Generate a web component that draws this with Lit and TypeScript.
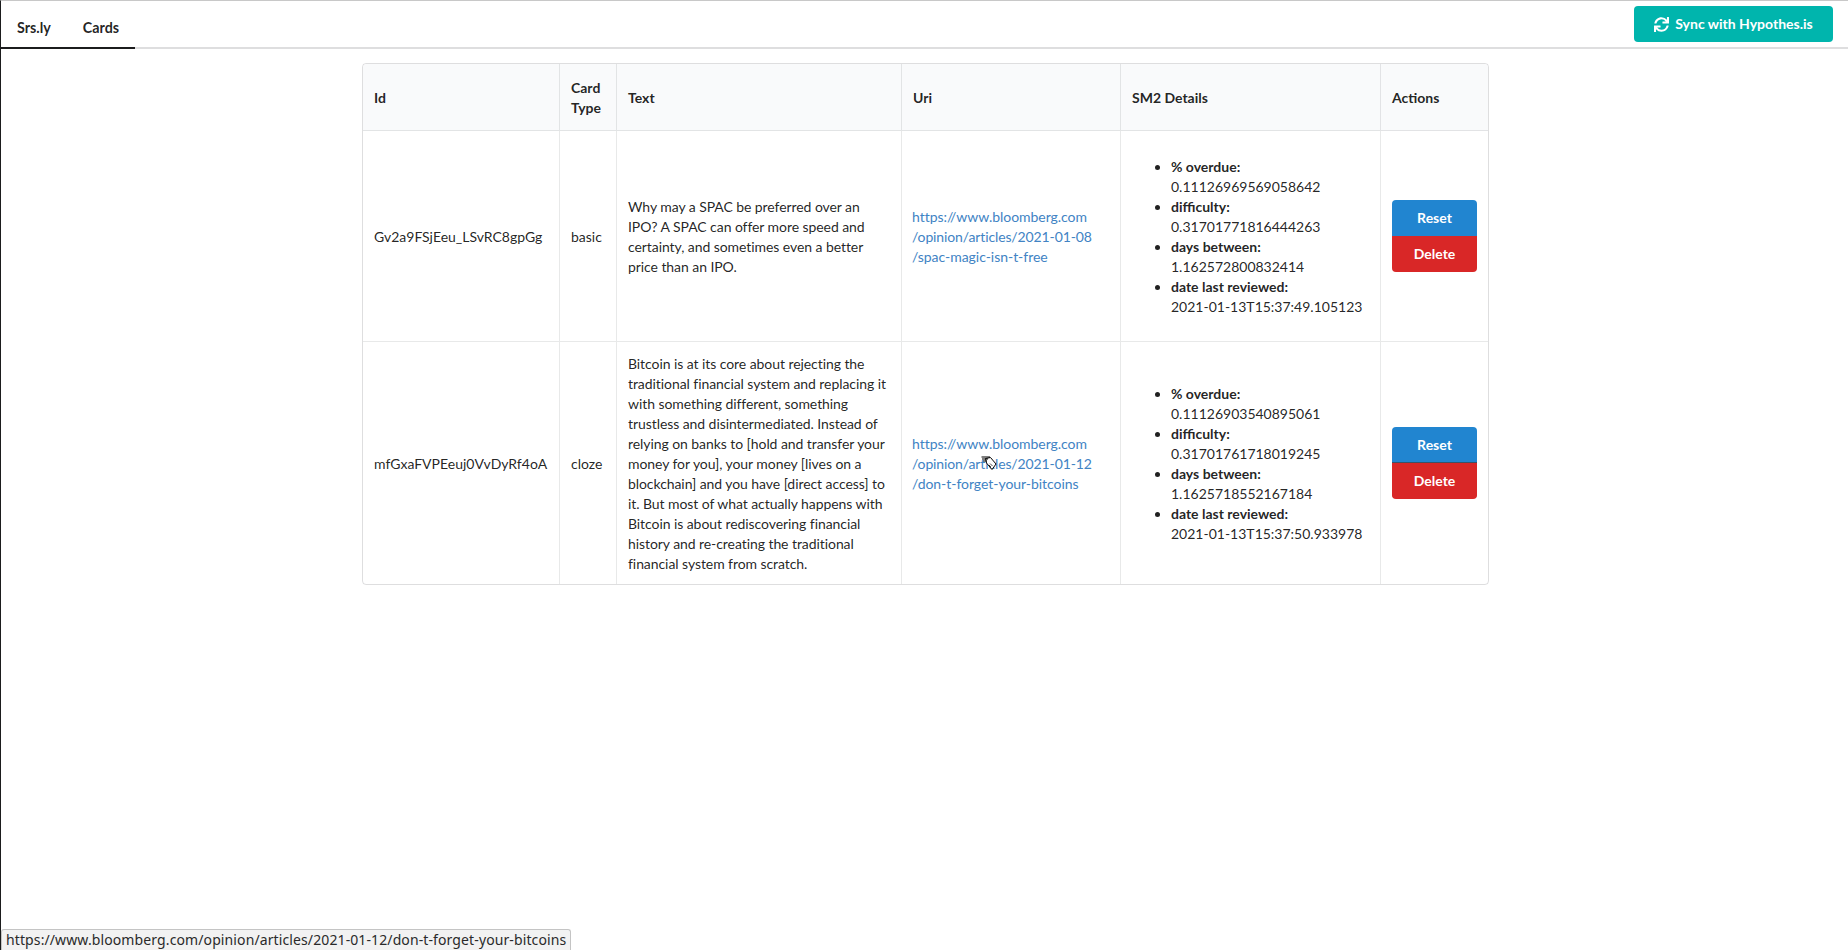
import { LitElement, html, css, svg } from "lit";
import { customElement } from "lit/decorators.js";

const rows = [
  {
    id: "Gv2a9FSjEeu_LSvRC8gpGg", type: "basic",
    text: "Why may a SPAC be preferred over an IPO? A SPAC can offer more speed and certainty, and sometimes even a better price than an IPO.",
    uri: ["https://www.bloomberg.com", "/opinion/articles/2021-01-08", "/spac-magic-isn-t-free"],
    overdue: "0.11126969569058642", difficulty: "0.31701771816444263", days: "1.162572800832414", date: "2021-01-13T15:37:49.105123",
    seam: false,
  },
  {
    id: "mfGxaFVPEeuj0VvDyRf4oA", type: "cloze",
    text: "Bitcoin is at its core about rejecting the traditional financial system and replacing it with something different, something trustless and disintermediated. Instead of relying on banks to [hold and transfer your money for you], your money [lives on a blockchain] and you have [direct access] to it. But most of what actually happens with Bitcoin is about rediscovering financial history and re-creating the traditional financial system from scratch.",
    uri: ["https://www.bloomberg.com", "/opinion/articles/2021-01-12", "/don-t-forget-your-bitcoins"],
    overdue: "0.11126903540895061", difficulty: "0.31701761718019245", days: "1.1625718552167184", date: "2021-01-13T15:37:50.933978",
    seam: true,
  },
];

const syncIcon = svg`<path fill="currentColor" d="M440.65 12.57l4 82.77A247.16 247.16 0 0 0 255.83 8C134.73 8 33.91 94.92 12.29 209.82A12 12 0 0 0 24.09 224h49.05a12 12 0 0 0 11.67-9.26 175.91 175.91 0 0 1 317-56.94l-101.46-4.86a12 12 0 0 0-12.57 12v47.41a12 12 0 0 0 12 12H500a12 12 0 0 0 12-12V12a12 12 0 0 0-12-12h-47.37a12 12 0 0 0-11.98 12.57zM255.83 432a175.61 175.61 0 0 1-146-77.8l101.8 4.87a12 12 0 0 0 12.57-12v-47.4a12 12 0 0 0-12-12H12a12 12 0 0 0-12 12V500a12 12 0 0 0 12 12h47.35a12 12 0 0 0 12-12.6l-4.15-82.57A247.17 247.17 0 0 0 255.83 504c121.11 0 221.93-86.92 243.55-201.82a12 12 0 0 0-11.8-14.18h-49.05a12 12 0 0 0-11.67 9.26A175.86 175.86 0 0 1 255.83 432z"/>`;

@customElement("app-root")
export class AppRoot extends LitElement {
  static styles = css`
    :host {
      display: block;
      position: relative;
      height: 950px;
      box-sizing: border-box;
      overflow: hidden;
      background: #fff;
      border-top: 1px solid #c8c8c8;
      border-left: 1px solid #1b1c1d;
      font-family: Lato, "Helvetica Neue", Arial, sans-serif;
      font-size: 14px;
      line-height: 20px;
      color: rgba(0, 0, 0, 0.87);
    }
    .menu {
      display: flex;
      align-items: stretch;
      justify-content: space-between;
      height: 48px;
      box-sizing: border-box;
      border-bottom: 2px solid rgba(34, 36, 38, 0.15);
    }
    .tabs { display: flex; margin-bottom: -2px; }
    .tab {
      display: flex;
      align-items: flex-end;
      padding: 0 16px 9px;
      font-size: 14.3px;
      font-weight: 700;
      color: rgba(0, 0, 0, 0.87);
      border-bottom: 2px solid #1b1c1d;
    }
    .sync {
      display: flex;
      align-items: center;
      gap: 6px;
      height: 36px;
      width: 199px;
      box-sizing: border-box;
      justify-content: center;
      margin: 5px 15px 0 0;
      border-radius: 4px;
      background: #00b5ad;
      color: #fff;
      font-weight: 700;
    }
    .sync svg { width: 15px; height: 15px; display: block; }
    .content { padding: 14px 0 0 2px; display: flex; justify-content: center; }
    table {
      width: 1127px;
      box-sizing: border-box;
      border: 1px solid rgba(34, 36, 38, 0.15);
      border-radius: 4px;
      border-collapse: separate;
      border-spacing: 0;
      table-layout: fixed;
      color: rgba(0, 0, 0, 0.87);
    }
    th {
      background: #f9fafb;
      padding: 14px 11px 12px;
      text-align: left;
      font-weight: 700;
      color: rgba(0, 0, 0, 0.87);
      border-bottom: 1px solid rgba(34, 36, 38, 0.1);
      border-left: 1px solid rgba(34, 36, 38, 0.1);
    }
    th:first-child { border-left: none; border-top-left-radius: 4px; }
    th:last-child { border-top-right-radius: 4px; }
    td {
      padding: 12px 11px 10px;
      border-left: 1px solid rgba(34, 36, 38, 0.1);
      border-top: 1px solid rgba(34, 36, 38, 0.1);
      vertical-align: middle;
    }
    td.actions { padding: 11px; }
    td.uri { padding-left: 10px; }
    tbody tr:first-child td { border-top: none; }
    td:first-child { border-left: none; }
    .text { letter-spacing: -0.07px; }
    a { color: #4183c4; text-decoration: none; letter-spacing: -0.04px; }
    a span { display: block; }
    a span:nth-child(2) { letter-spacing: -0.12px; }
    ul { margin: 14px 0; padding-left: 39px; }
    li b { display: block; font-weight: 700; }
    .btns { display: flex; flex-direction: column; width: 85px; }
    .btn {
      height: 36px;
      display: flex;
      align-items: center;
      justify-content: center;
      color: #fff;
      font-weight: 700;
    }
    .reset { background: #2185d0; border-radius: 4px 4px 0 0; }
    .delete { background: #d92727; border-radius: 0 0 4px 4px; }
    .seam .delete { box-shadow: 0 -1px 0 rgba(70, 60, 60, 0.7); }
    .status {
      position: absolute;
      left: 0;
      bottom: 0;
      height: 21px;
      width: 570px;
      box-sizing: border-box;
      padding: 0 0 0 4px;
      display: flex;
      align-items: center;
      background: #f2f2f2;
      border: 1px solid #c4c4c4;
      border-bottom: none;
      border-radius: 3px 3px 0 0;
      font-family: "Noto Sans", sans-serif;
      font-size: 14px;
      letter-spacing: 0.11px;
      color: #2a2a2a;
      white-space: nowrap;
    }
    .cursor { position: absolute; left: 980px; top: 455px; width: 16px; height: 16px; }
  `;

  render() {
    return html`
      <div class="menu">
        <div class="tabs">
          <div class="tab">Srs.ly</div>
          <div class="tab">Cards</div>
        </div>
        <div class="sync">
          <svg viewBox="0 0 512 512">${syncIcon}</svg>
          <span>Sync with Hypothes.is</span>
        </div>
      </div>
      <div class="content">
        <table>
          <colgroup>
            <col style="width:196px" /><col style="width:57px" /><col style="width:285px" />
            <col style="width:219px" /><col style="width:260px" /><col style="width:108px" />
          </colgroup>
          <thead>
            <tr>
              <th>Id</th><th>Card Type</th><th>Text</th><th>Uri</th><th>SM2 Details</th><th>Actions</th>
            </tr>
          </thead>
          <tbody>
            ${rows.map((r) => html`
              <tr>
                <td>${r.id}</td>
                <td>${r.type}</td>
                <td class="text">${r.text}</td>
                <td class="uri"><a href="#">${r.uri.map((u) => html`<span>${u}</span>`)}</a></td>
                <td>
                  <ul>
                    <li><b>% overdue:</b>${r.overdue}</li>
                    <li><b>difficulty:</b>${r.difficulty}</li>
                    <li><b>days between:</b>${r.days}</li>
                    <li><b>date last reviewed:</b>${r.date}</li>
                  </ul>
                </td>
                <td class="actions">
                  <div class="btns ${r.seam ? "seam" : ""}">
                    <div class="btn reset">Reset</div>
                    <div class="btn delete">Delete</div>
                  </div>
                </td>
              </tr>
            `)}
          </tbody>
        </table>
      </div>
      <svg class="cursor" viewBox="0 0 16 16">
        <path d="M4.5 2.5 L9.5 1.5 L15 8 L11 13.5 L5.5 7 Z" fill="#fff" stroke="#000" stroke-width="1"/>
        <path d="M0.5 1 L9 1 M1 3 L7 3 M2 5 L6 5" stroke="#000" stroke-width="1.2"/>
        <path d="M9 7.5 L11.5 10 M8 9 L10 11" stroke="#000" stroke-width="0.7"/>
      </svg>
      <div class="status">https://www.bloomberg.com/opinion/articles/2021-01-12/don-t-forget-your-bitcoins</div>
    `;
  }
}
